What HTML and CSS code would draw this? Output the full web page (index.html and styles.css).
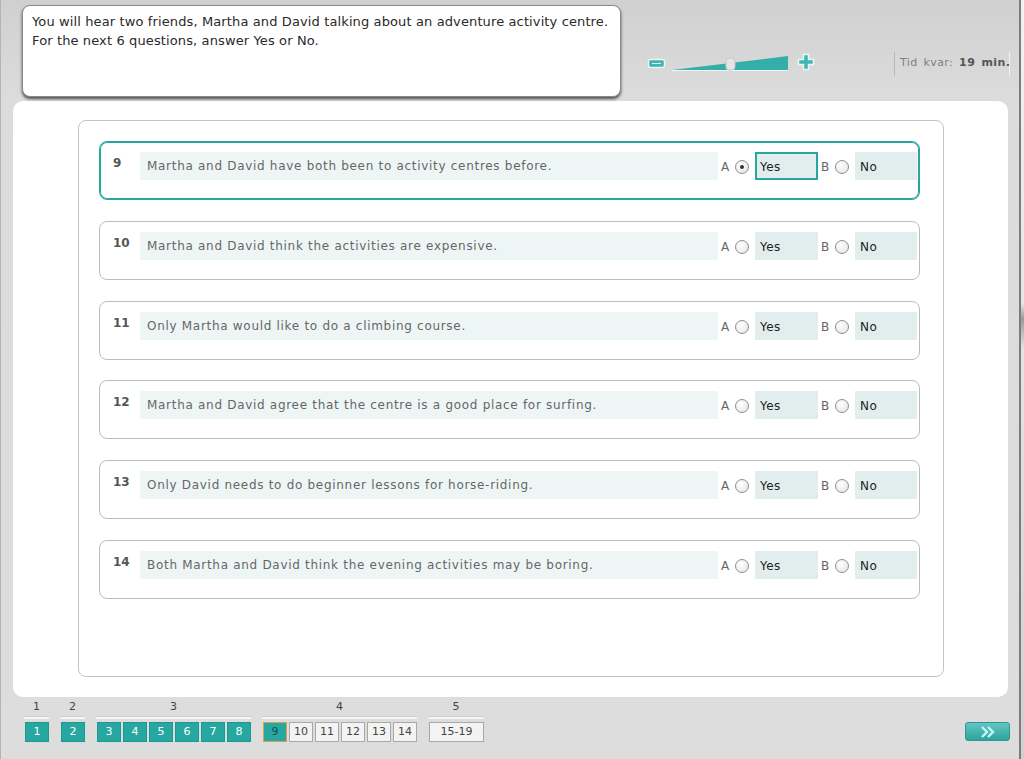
FILE: index.html
```html
<!DOCTYPE html>
<html lang="en">
<head>
  <meta charset="UTF-8" />
  <title>Listening test</title>
  <link rel="stylesheet" href="styles.css">
</head>
<body>
  <div class="app">
    <!-- TOP BAR -->
    <div class="top">
      <div class="instructions">
        You will hear two friends, Martha and David talking about an adventure activity centre.<br>
        For the next 6 questions, answer Yes or No.
      </div>

      <div class="zoom">
        <svg width="170" height="20" viewBox="0 0 170 20">
          <rect x="2.5" y="6.5" width="16" height="8" rx="2" fill="#3fb6b0" stroke="#e8f6f5" stroke-width="1.5"/>
          <line x1="6" y1="10.5" x2="15" y2="10.5" stroke="#e8f6f5" stroke-width="1"/>
          <polygon points="26,17 142,3 142,17" fill="#33aea8"/>
          <line x1="26" y1="17.5" x2="142" y2="17.5" stroke="#f4f4f4" stroke-width="1"/>
          <rect x="80" y="5" width="9" height="12" rx="3" fill="#e4e4e4" stroke="#c8c8c8"/>
          <path d="M157.5 1.5h5v5h5v5h-5v5h-5v-5h-5v-5h5z" fill="#3fb6b0" stroke="#e8f6f5" stroke-width="1.5"/>
        </svg>
      </div>

      <div class="timer">
        <span class="timer-label">Tid kvar:</span> <b>19 min.</b>
      </div>
    </div>

    <!-- QUESTIONS -->
    <div class="panel">
      <div class="question-box">

        <div class="question selected">
          <span class="num">9</span>
          <div class="q-text">Martha and David have both been to activity centres before.</div>
          <span class="opt-letter">A</span><span class="radio checked"></span>
          <div class="answer yes chosen">Yes</div>
          <span class="opt-letter">B</span><span class="radio"></span>
          <div class="answer no">No</div>
        </div>

        <div class="question">
          <span class="num">10</span>
          <div class="q-text">Martha and David think the activities are expensive.</div>
          <span class="opt-letter">A</span><span class="radio"></span>
          <div class="answer yes">Yes</div>
          <span class="opt-letter">B</span><span class="radio"></span>
          <div class="answer no">No</div>
        </div>

        <div class="question">
          <span class="num">11</span>
          <div class="q-text">Only Martha would like to do a climbing course.</div>
          <span class="opt-letter">A</span><span class="radio"></span>
          <div class="answer yes">Yes</div>
          <span class="opt-letter">B</span><span class="radio"></span>
          <div class="answer no">No</div>
        </div>

        <div class="question">
          <span class="num">12</span>
          <div class="q-text">Martha and David agree that the centre is a good place for surfing.</div>
          <span class="opt-letter">A</span><span class="radio"></span>
          <div class="answer yes">Yes</div>
          <span class="opt-letter">B</span><span class="radio"></span>
          <div class="answer no">No</div>
        </div>

        <div class="question">
          <span class="num">13</span>
          <div class="q-text">Only David needs to do beginner lessons for horse-riding.</div>
          <span class="opt-letter">A</span><span class="radio"></span>
          <div class="answer yes">Yes</div>
          <span class="opt-letter">B</span><span class="radio"></span>
          <div class="answer no">No</div>
        </div>

        <div class="question">
          <span class="num">14</span>
          <div class="q-text">Both Martha and David think the evening activities may be boring.</div>
          <span class="opt-letter">A</span><span class="radio"></span>
          <div class="answer yes">Yes</div>
          <span class="opt-letter">B</span><span class="radio"></span>
          <div class="answer no">No</div>
        </div>

      </div>
    </div>

    <!-- NAVIGATION -->
    <div class="nav">
      <div class="part">
        <div class="part-label">1</div>
        <div class="part-buttons"><span class="qbtn done">1</span></div>
      </div>
      <div class="part">
        <div class="part-label">2</div>
        <div class="part-buttons"><span class="qbtn done">2</span></div>
      </div>
      <div class="part">
        <div class="part-label">3</div>
        <div class="part-buttons">
          <span class="qbtn done">3</span><span class="qbtn done">4</span><span class="qbtn done">5</span><span class="qbtn done">6</span><span class="qbtn done">7</span><span class="qbtn done">8</span>
        </div>
      </div>
      <div class="part">
        <div class="part-label">4</div>
        <div class="part-buttons">
          <span class="qbtn current">9</span><span class="qbtn">10</span><span class="qbtn">11</span><span class="qbtn">12</span><span class="qbtn">13</span><span class="qbtn">14</span>
        </div>
      </div>
      <div class="part">
        <div class="part-label">5</div>
        <div class="part-buttons"><span class="qbtn wide">15-19</span></div>
      </div>

      <button class="next-btn">
        <svg width="16" height="12" viewBox="0 0 16 12">
          <path d="M2 1l5 5-5 5M8 1l5 5-5 5" fill="none" stroke="#c4f8f8" stroke-width="2.4"/>
        </svg>
      </button>
    </div>
  </div>
  <div class="side"></div>
</body>
</html>
```

FILE: styles.css
```css
:root {
  --teal: #27a7a1;
  --teal-dark: #1f9690;
  --text-gray: #666666;
  --answer-bg: #e1eeed;
  --font-family: "DejaVu Sans", Verdana, sans-serif;
}
* {
  margin: 0;
  padding: 0;
  box-sizing: border-box;
}
body {
  display: flex;
  width: 1024px;
  height: 759px;
  overflow: hidden;
  background: #d8d8d8;
  font-family: var(--font-family);
}
.app {
  width: 1021px;
  height: 759px;
  background: linear-gradient(#d0d0d0, #dcdcdc 100px, #dddddd);
  border-left: 1px solid #b4b4b4;
  border-right: 2px solid #7c7c7c;
}
.side {
  flex: 1;
  background: linear-gradient(#f2f2f2, #e6e6e6 40%, #9a9a9a 42%, #e4e4e4 46%, #d0d0d0);
}

/* Top bar */
.top {
  display: flex;
  align-items: flex-start;
  height: 101px;
}
.instructions {
  margin: 5px 0 0 21px;
  width: 599px;
  height: 92px;
  padding: 6px 9px;
  background: #fff;
  border: 1px solid #8a8a8a;
  border-radius: 8px;
  box-shadow: 0 2px 3px #505050;
  font-size: 13px;
  line-height: 19px;
  letter-spacing: 0.12px;
  color: #2a2a2a;
}
.zoom {
  margin: 53px 0 0 25px;
  line-height: 0;
}
.timer {
  margin: 52px 0 0 78px;
  height: 24px;
  padding-left: 5px;
  border-left: 1px solid #b8b8b8;
  box-shadow: -1px 0 0 #f2f2f2 inset;
  font-size: 11px;
  line-height: 22px;
  letter-spacing: 0.4px;
  word-spacing: 2px;
  color: #555;
  white-space: nowrap;
}
.timer-label {
  color: #808080;
}

/* White panel */
.panel {
  margin-left: 12px;
  width: 995px;
  height: 596px;
  padding: 19px 0 0 65px;
  background: #fff;
  border-radius: 10px;
}
.question-box {
  width: 866px;
  height: 557px;
  padding: 20px 0 0 20px;
  border: 1px solid #c4c4c4;
  border-radius: 8px;
  display: flex;
  flex-direction: column;
  gap: 20.8px;
}
.question {
  display: flex;
  align-items: flex-start;
  width: 821px;
  height: 59px;
  padding: 10px 0 0 13px;
  border: 1px solid #bcbcbc;
  border-radius: 8px;
  font-size: 12px;
  color: var(--text-gray);
}
.question.selected {
  border-color: var(--teal);
  box-shadow: inset 0 0 0 1px var(--teal);
}
.num {
  width: 27px;
  padding-top: 4px;
  font-weight: bold;
  color: #555;
}
.q-text {
  width: 578px;
  height: 28px;
  padding-left: 7px;
  line-height: 29px;
  background: #eef6f5;
  letter-spacing: 0.7px;
}
.opt-letter {
  margin-left: 3px;
  width: 11px;
  line-height: 30px;
}
.radio {
  margin: 8px 6px 0 3px;
  width: 14px;
  height: 14px;
  border: 1px solid #8e8e8e;
  border-radius: 50%;
  background: radial-gradient(circle at 40% 35%, #fff, #e2e2e2);
  position: relative;
}
.radio.checked::after {
  content: "";
  position: absolute;
  left: 4px;
  top: 4px;
  width: 4px;
  height: 4px;
  border-radius: 50%;
  background: #333;
}
.answer {
  width: 63px;
  height: 28px;
  padding-left: 5px;
  line-height: 30px;
  background: var(--answer-bg);
  color: #222;
  font-size: 12px;
  letter-spacing: 0.4px;
}
.answer.no {
  width: 62px;
  padding-left: 5px;
}
.answer.chosen {
  border: 2px solid var(--teal);
  padding-left: 3px;
  line-height: 26px;
}

/* Navigation */
.nav {
  display: flex;
  align-items: flex-start;
  padding: 3px 0 0 23px;
  gap: 11px;
}
.part {
  display: flex;
  flex-direction: column;
  align-items: stretch;
}
.part-label {
  text-align: center;
  font-size: 11px;
  line-height: 14px;
  color: #444;
  height: 17px;
}
.part-buttons {
  display: flex;
  gap: 2px;
  padding: 3px 0 0 1px;
  border-top: 2px solid #f4f4f4;
  box-shadow: 0 -1px 0 #cfcfcf;
}
.qbtn {
  display: block;
  width: 24px;
  height: 20px;
  text-align: center;
  font-size: 11px;
  line-height: 18px;
  border: 1px solid #a8a8a8;
  background: #f3f3f3;
  color: #444;
}
.qbtn.done {
  background: var(--teal);
  border-color: var(--teal-dark);
  color: #fff;
}
.qbtn.current {
  background: var(--teal);
  border-color: #d9a24a;
  color: #1b4f4c;
}
.qbtn.wide {
  width: 55px;
}
.next-btn {
  margin: 22px 9px 0 auto;
  width: 45px;
  height: 19px;
  border: 1px solid #2a9892;
  border-radius: 3px;
  background: linear-gradient(#62c6c2, #2ea39d);
  line-height: 0;
  cursor: pointer;
}
```
